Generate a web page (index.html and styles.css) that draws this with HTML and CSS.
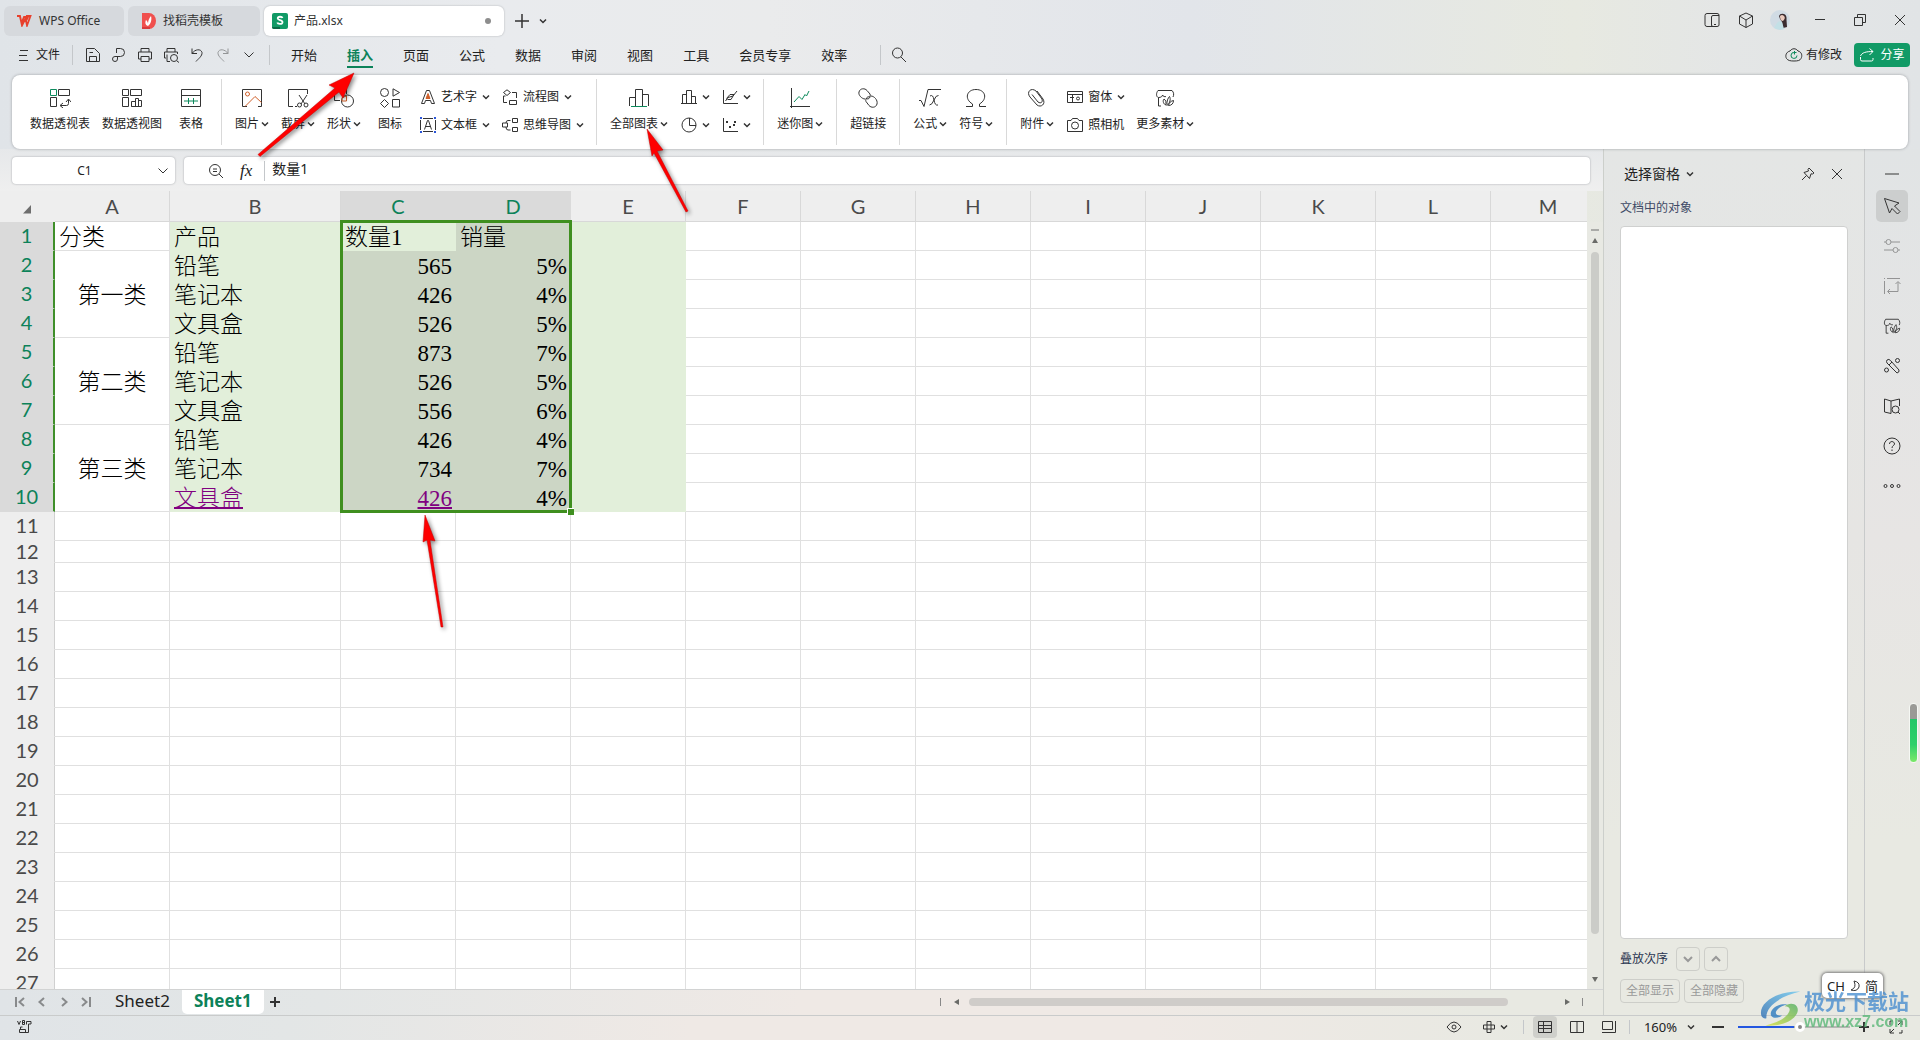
FILE: index.html
```html
<!DOCTYPE html>
<html lang="zh-CN">
<head>
<meta charset="utf-8">
<title>产品.xlsx - WPS Office</title>
<link rel="stylesheet" href="styles.css">
</head>
<body>
<svg class="defs" aria-hidden="true">
  <symbol id="chev" viewBox="0 0 8 8"><path d="M1 2.500 4 5.500 7 2.500" stroke-width="1.500"/></symbol>
  <symbol id="material" viewBox="0 0 20 20"><path d="M6 18H3.500V9.500C1 9 1 5 3 2.500H17C19 4.500 19 7 18 9M3.500 9.500C6 9.500 7.500 8.500 7.500 7 8 8.500 10 9 11 8.500M10.500 17C7.500 15 8 12 9 11 11 12 11.500 15 10.500 17ZM12 17.500C11.500 13 13 10 14.500 8.500 16 11 15 15 12 17.500ZM13.500 17.500C14 14.500 16 13 18.500 12.500 18.500 15.500 16.500 17.500 13.500 17.500Z"/></symbol>
</svg>

<header class="top">
  <div class="titlebar">
    <button class="doc-tab home"><svg width="16" height="12" viewBox="0 0 16 12"><path d="M1 1h3l1.500 7L8 2h4L10.500 5M4 1.500 6 10.500 9.500 3.500 11 10.500 14.500 1H10" fill="none" stroke="#e8402c" stroke-width="1.800"/></svg>WPS Office</button>
    <button class="doc-tab docer"><svg class="pic" width="14" height="16" viewBox="0 0 14 16"><path d="M0 0h7a7 8 0 0 1 0 16H0z" fill="#f0504e"/><path d="M6 13C3 12 3 9 4 7c1 1 2 2 2 4 0-3 1-6 3-8 1 3 0 8-3 10Z" fill="#fff"/><path d="M0 14h8v2H0z" fill="#d83a3c"/></svg>找稻壳模板</button>
    <button class="doc-tab active"><svg class="pic" width="16" height="16" viewBox="0 0 16 16"><rect width="16" height="16" rx="2" fill="#119a66"/><path d="M0 14h8v2H2q-2 0-2-2Z" fill="#0a6b46"/><path d="M10.500 5C10 3.300 5.800 3.200 5.700 5.400 5.600 7.600 10.600 6.600 10.500 9.200 10.400 11.500 5.800 11.400 5.300 9.500" fill="none" stroke="#fff" stroke-width="1.800"/></svg>产品.xlsx<i class="dot"></i></button>
    <button class="ic" aria-label="新建"><svg width="14" height="14" viewBox="0 0 14 14"><path d="M7 0v14M0 7h14" stroke-width="1.500"/></svg></button>
    <button class="ic tight" aria-label="更多"><svg width="8" height="8"><use href="#chev"/></svg></button>
    <div class="window-tools">
      <button class="ic" aria-label="侧栏"><svg width="16" height="16" viewBox="0 0 16 16"><path d="M9 14.500H3Q1 14.500 1 12.500V3.500Q1 1.500 3 1.500H13Q15 1.500 15 3V13Q15 14.500 13 14.500H9Q7.500 14.500 7.500 13V5Q7.500 3.500 9 3.500H15M10 12.500h2"/></svg></button>
      <button class="ic" aria-label="应用"><svg width="16" height="16" viewBox="0 0 16 16"><path d="M8 1 14.500 4V12L8 15.500 1.500 12V4ZM1.500 4 8 8 14.500 4M8 8V15.500"/></svg></button>
      <button class="ic account" aria-label="账号"><svg width="20" height="20" viewBox="0 0 20 20" class="pic"><circle cx="10" cy="10" r="10" fill="#d0dbe4"/><path d="M9 6Q10 3 14 4 17 5 16.500 10L17 17 13 18 12 12 10 9Z" fill="#3a2c30"/><path d="M10 6Q12 4 14 6T13 11Q10 11 10 6Z" fill="#e9c9bd"/><path d="M4 18 7 13Q9 10 12 12L14 19Q9 21 4 18Z" fill="#c3e0e6"/></svg></button>
      <button class="ic wide" aria-label="最小化"><svg width="10" height="16" viewBox="0 0 10 16"><path d="M0 7.500h10"/></svg></button>
      <button class="ic wide" aria-label="还原"><svg width="14" height="14" viewBox="0 0 14 14"><path d="M1.500 4.500h8v8h-8zM4.500 4.500v-3h8v8h-3"/></svg></button>
      <button class="ic wide" aria-label="关闭"><svg width="12" height="12" viewBox="0 0 12 12"><path d="M1 1l10 10M11 1 1 11"/></svg></button>
    </div>
  </div>

  <nav class="menubar">
    <button class="file"><svg width="9" height="12" viewBox="0 0 9 12"><path d="M1 1.500h8M0 6.500h8M0 11.500h9"/></svg>文件</button>
    <i class="vline"></i>
    <div class="quick">
      <button class="ic" aria-label="保存"><svg width="16" height="16" viewBox="0 0 16 16"><path d="M1.500 1.500H9.500L14.500 6.500V14.500H1.500ZM4.500 14.500V9.500H11.500V14.500M4.500 5.500H8"/></svg></button>
      <button class="ic" aria-label="输出"><svg width="16" height="16" viewBox="0 0 16 16"><path d="M5.500 6V1.500H9.500A4 4 0 0 1 9.500 9.500H4Q1.500 9.500 1.500 12T4 14.500 6.500 12V9.500"/></svg></button>
      <button class="ic" aria-label="打印"><svg width="16" height="16" viewBox="0 0 16 16"><path d="M4 5V1.500h8V5M4 12H1.500V5h13V12H12M4 9.500h8v5H4z"/></svg></button>
      <button class="ic" aria-label="打印预览"><svg width="16" height="16" viewBox="0 0 16 16"><path d="M4 5V1.500h8V5M3 11H1.500V5h13V7M4 7.500V14.500H7M14 14l2 1.500"/><circle cx="11" cy="11" r="3.500"/></svg></button>
      <button class="ic" aria-label="撤销"><svg width="16" height="16" viewBox="0 0 16 16"><path d="M3 1.500V6.500H8M3 6.500C6 2 12 1.500 13 5.500 13.500 9 9 12 7 14.500"/></svg></button>
      <button class="ic dim" aria-label="恢复"><svg width="16" height="16" viewBox="0 0 16 16"><path d="M13 1.500V6.500H8M13 6.500C10 2 4 1.500 3 5.500 2.500 9 7 12 9 14.500"/></svg></button>
      <button class="ic" aria-label="自定义"><svg width="12" height="8" viewBox="0 0 12 8"><path d="M1.500 1.500 6 6 10.500 1.500"/></svg></button>
    </div>
    <i class="vline"></i>
    <div class="menus">
      <button>开始</button><button class="on">插入</button><button>页面</button><button>公式</button><button>数据</button><button>审阅</button><button>视图</button><button>工具</button><button>会员专享</button><button>效率</button>
    </div>
    <i class="vline"></i>
    <button class="ic search" aria-label="搜索"><svg width="16" height="16" viewBox="0 0 16 16"><circle cx="6.500" cy="6" r="5"/><path d="M10 10 15 15"/></svg></button>
    <div class="sync">
      <button class="modified"><svg width="18" height="14" viewBox="0 0 18 14"><path d="M5 3C7 0 11 0 13 3 17 4 17.500 8 16 10.500 15 12.500 13 13 9 13S3 12.500 1.500 10.500C0 8 1 4 5 3Z"/><path class="g" d="M9.500 4.500A3 3 0 1 0 12 7.500M9.500 3v3.500M9.500 4.500h2"/></svg>有修改</button>
      <button class="share"><svg width="16" height="14" viewBox="0 0 16 14"><path d="M1.500 9v2.500Q1.500 13 3 13H12.500Q14 13 14 11.500V10M1.500 8C3 4.500 7 3.500 14 3.500M10.500 .5 14 3.500 10.500 7"/></svg>分享</button>
    </div>
  </nav>

  <section class="ribbon" aria-label="插入">
    <div class="group">
      <button class="big"><svg width="22" height="20" viewBox="0 0 22 20"><path class="g" d="M1.500 1.500h6v6h-6z"/><path d="M9.500 1.500h11v6h-11zM1.500 9.500h6v9h-6zM11.500 17.500h6q2 0 2-2v-4M17 14l2.500-3 2.500 3M14 15l-3 2.500 3 2.500"/></svg><span>数据透视表</span></button>
      <button class="big"><svg width="22" height="20" viewBox="0 0 22 20"><path d="M1.500 1.500h6v6h-6zM9.500 1.500h11v6h-11zM1.500 9.500h6v9h-6zM10.500 18.500v-5h4v5zM14.500 18.500v-8h3v8M17.500 12.500h3v6h-10"/></svg><span>数据透视图</span></button>
      <button class="big"><svg width="22" height="20" viewBox="0 0 22 20"><path d="M1.500 1.500h19v17h-19zM1.500 7.500h19"/><path class="g" d="M4 13h14M8.500 10v6M13.500 10v6"/></svg><span>表格</span></button>
    </div>
    <div class="group">
      <button class="big"><svg width="22" height="20" viewBox="0 0 22 20"><path d="M6 18.500H1.500v-17h19v17H17"/><g class="o"><circle cx="6.500" cy="6" r="2"/><path d="M4 18.500 14 8.500l6.500 6"/></g></svg><span>图片<svg width="8" height="8"><use href="#chev"/></svg></span></button>
      <button class="big"><svg width="22" height="20" viewBox="0 0 22 20"><path d="M6 18.500H1.500v-17h19V6M12 7l6 9M20 7l-6 9M8 18.500h2"/><circle cx="12.500" cy="17" r="2"/><circle cx="19" cy="17" r="2"/></svg><span>截屏<svg width="8" height="8"><use href="#chev"/></svg></span></button>
      <button class="big"><svg width="22" height="20" viewBox="0 0 22 20"><path d="M7 12.500H1.500v-11h12V6"/><circle cx="14.500" cy="13" r="6"/><path class="o" d="M9 13V9.500L13.500 8v5Z"/></svg><span>形状<svg width="8" height="8"><use href="#chev"/></svg></span></button>
      <button class="big"><svg width="22" height="20" viewBox="0 0 22 20"><circle cx="5.500" cy="4.500" r="4"/><path d="M14 .8v7.400L20.500 4.500ZM5.500 11.500 9.500 15.500 5.500 19.500 1.500 15.500ZM13.500 11.500h7v7.500h-7z"/></svg><span>图标</span></button>
      <div class="pair">
        <button class="small"><svg width="16" height="16" viewBox="0 0 16 16"><path d="M1.500 14.500 6.500 1.500h3L14.500 14.500H11.500L10.500 11.500H5.500L4.500 14.500Z"/><path class="o fill" d="M8 4.500 10 9.500H6Z"/></svg>艺术字<svg width="8" height="8"><use href="#chev"/></svg></button>
        <button class="small"><svg width="16" height="16" viewBox="0 0 16 16"><path d="M.5 3v10M15.500 3v10M3 1.500h10M3 14.500h10M4.500 12.500 7.500 3.500h1l3 9M5.500 9.500h5"/><path class="b" d="M0 0h2v2H0zM14 0h2v2h-2zM0 14h2v2H0zM14 14h2v2h-2z"/></svg>文本框<svg width="8" height="8"><use href="#chev"/></svg></button>
      </div>
      <div class="pair">
        <button class="small"><svg width="16" height="16" viewBox="0 0 16 16"><path d="M5 .8 8.500 3.500 5 6.500 1.500 3.500ZM1.500 7V13.500H5M7.500 11.500h7v4h-7zM10 3.500H14.500V9M1.500 7h2"/></svg>流程图<svg width="8" height="8"><use href="#chev"/></svg></button>
        <button class="small"><svg width="16" height="16" viewBox="0 0 16 16"><path d="M.5 6h5v4h-5zM10.500 1.500h5v4h-5zM10.500 10.500h5v4h-5zM8.500 3.500H6Q4 3.500 4 6M8.500 13H6Q4 13 4 10"/></svg>思维导图<svg width="8" height="8"><use href="#chev"/></svg></button>
      </div>
    </div>
    <div class="group">
      <button class="big"><svg width="22" height="20" viewBox="0 0 22 20"><path d="M1.500 18V9.500h6V18M7.500 10V1.500h7V18M14.500 6.500h6V18"/><path class="g" d="M3 18.500h16"/></svg><span>全部图表<svg width="8" height="8"><use href="#chev"/></svg></span></button>
      <div class="pair">
        <button class="small" aria-label="柱形图"><svg width="16" height="16" viewBox="0 0 16 16"><path d="M0 14.500h16M1.500 14.500v-9h4v9M5.500 6V1.500h5v13M10.500 7.500h4v7"/></svg><svg width="8" height="8"><use href="#chev"/></svg></button>
        <button class="small" aria-label="饼图"><svg width="16" height="16" viewBox="0 0 16 16"><circle cx="8" cy="8" r="7"/><path d="M8.500 1V8.500H15"/></svg><svg width="8" height="8"><use href="#chev"/></svg></button>
      </div>
      <div class="pair">
        <button class="small" aria-label="折线图"><svg width="16" height="16" viewBox="0 0 16 16"><path d="M1.500 1v13.500H16M3.500 12 6 8.500 11 7 15 2M4.500 9.500 8 5.500H12L9 10.500H5.500"/></svg><svg width="8" height="8"><use href="#chev"/></svg></button>
        <button class="small" aria-label="散点图"><svg width="16" height="16" viewBox="0 0 16 16"><path d="M1.500 1v13.500H16"/><path d="M4 5h2M7 10h2M12 5h2M11 8h2" stroke-width="2"/></svg><svg width="8" height="8"><use href="#chev"/></svg></button>
      </div>
    </div>
    <div class="group">
      <button class="big"><svg width="22" height="20" viewBox="0 0 22 20"><path d="M2.500 0v20M1 18.500h20"/><path class="g" d="M5 14 10 8.500 13 11.500 16 6.500 17.500 8 20 3"/></svg><span>迷你图<svg width="8" height="8"><use href="#chev"/></svg></span></button>
    </div>
    <div class="group">
      <button class="big"><svg width="22" height="20" viewBox="0 0 22 20"><path d="M8 11C5 11 1 7 2 4 3 0 8 0 10 2.500L13 6C14 9 12 12 9 10.500M14 8C17 8 21 12 20 16 19 20 14 20 12 17.500L9 13.500C8 11 10 8 13 9"/></svg><span>超链接</span></button>
    </div>
    <div class="group">
      <button class="big"><svg width="22" height="20" viewBox="0 0 22 20"><path d="M0 12.500H2L5 18.500 9 1.500H22M11 8Q14 6 15 12T19 17M19.500 7.500Q17 7 15 12T10.500 17"/></svg><span>公式<svg width="8" height="8"><use href="#chev"/></svg></span></button>
      <button class="big"><svg width="22" height="20" viewBox="0 0 22 20"><path d="M1 18.500H7.500V16C-1 11 1.500 1.500 11 1.500S23 11 14.500 16V18.500H21"/></svg><span>符号<svg width="8" height="8"><use href="#chev"/></svg></span></button>
    </div>
    <div class="group">
      <button class="big"><svg width="22" height="20" viewBox="0 0 22 20"><path d="M11 3 17 11C20 16 15 20 11 17L4 9C0 4 5-1 10 3L16 11C17 14 15 16 12 14L6 6.500"/></svg><span>附件<svg width="8" height="8"><use href="#chev"/></svg></span></button>
      <div class="pair">
        <button class="small"><svg width="16" height="16" viewBox="0 0 16 16"><path d="M.5 2.500h15v11H.5zM.5 5.500h15M3 8.500h4M5.500 5.500v8"/><circle cx="11" cy="9.500" r="1.500"/></svg>窗体<svg width="8" height="8"><use href="#chev"/></svg></button>
        <button class="small"><svg width="16" height="16" viewBox="0 0 16 16"><path d="M.5 3.500H4L5.500 1.500h5L12 3.500h3.500v11H.5z"/><circle cx="8" cy="8.500" r="3.500"/></svg>照相机</button>
      </div>
      <button class="big"><svg width="22" height="20" viewBox="0 0 20 20"><use href="#material"/></svg><span>更多素材<svg width="8" height="8"><use href="#chev"/></svg></span></button>
    </div>
  </section>
</header>

<div class="work">
  <main class="sheet">
    <div class="formula">
      <div class="namebox"><input aria-label="名称框" value="C1"><svg width="12" height="8" viewBox="0 0 12 8"><path d="M1.500 1.500 6 6 10.500 1.500"/></svg></div>
      <div class="fxbox">
        <svg width="16" height="16" viewBox="0 0 16 16"><circle cx="7" cy="7" r="5.500"/><path d="M11 11l4 4M5 6h4M5 8.500h4"/></svg>
        <em>fx</em><i class="vline"></i>
        <input aria-label="编辑栏" value="数量1">
      </div>
    </div>
    <div class="gridrow">
      <div class="grid">
        <table>
          <colgroup><col class="ch"><col class="cn"><col class="cb"><col class="cn" span="11"></colgroup>
          <thead><tr><th class="corner"><svg width="10" height="10" viewBox="0 0 10 10"><path d="M9 1V9.500H1Z"/></svg></th><th>A<th>B<th class="s">C<th class="s">D<th>E<th>F<th>G<th>H<th>I<th>J<th>K<th>L<th>M</tr></thead>
          <tbody class="data">
            <tr><th>1<td>分类<td class="f">产品<td class="f">数量1<td class="x">销量<td class="f"><td><td><td><td><td><td><td><td></tr>
            <tr><th>2<td class="m" rowspan="3">第一类<td class="f">铅笔<td class="x n">565<td class="x n">5%<td class="f"><td><td><td><td><td><td><td><td></tr>
            <tr><th>3<td class="f">笔记本<td class="x n">426<td class="x n">4%<td class="f"><td><td><td><td><td><td><td><td></tr>
            <tr><th>4<td class="f">文具盒<td class="x n">526<td class="x n">5%<td class="f"><td><td><td><td><td><td><td><td></tr>
            <tr><th>5<td class="m" rowspan="3">第二类<td class="f">铅笔<td class="x n">873<td class="x n">7%<td class="f"><td><td><td><td><td><td><td><td></tr>
            <tr><th>6<td class="f">笔记本<td class="x n">526<td class="x n">5%<td class="f"><td><td><td><td><td><td><td><td></tr>
            <tr><th>7<td class="f">文具盒<td class="x n">556<td class="x n">6%<td class="f"><td><td><td><td><td><td><td><td></tr>
            <tr><th>8<td class="m" rowspan="3">第三类<td class="f">铅笔<td class="x n">426<td class="x n">4%<td class="f"><td><td><td><td><td><td><td><td></tr>
            <tr><th>9<td class="f">笔记本<td class="x n">734<td class="x n">7%<td class="f"><td><td><td><td><td><td><td><td></tr>
            <tr><th>10<td class="f"><a href="#pen">文具盒</a><td class="x n"><a href="#pen">426</a><td class="x n">4%<td class="f"><td><td><td><td><td><td><td><td></tr>
          </tbody>
          <tbody>
            <tr><th>11<td><td><td><td><td><td><td><td><td><td><td><td><td></tr>
            <tr class="low"><th>12<td><td><td><td><td><td><td><td><td><td><td><td><td></tr>
            <tr><th>13<td><td><td><td><td><td><td><td><td><td><td><td><td></tr>
            <tr><th>14<td><td><td><td><td><td><td><td><td><td><td><td><td></tr>
            <tr><th>15<td><td><td><td><td><td><td><td><td><td><td><td><td></tr>
            <tr><th>16<td><td><td><td><td><td><td><td><td><td><td><td><td></tr>
            <tr><th>17<td><td><td><td><td><td><td><td><td><td><td><td><td></tr>
            <tr><th>18<td><td><td><td><td><td><td><td><td><td><td><td><td></tr>
            <tr><th>19<td><td><td><td><td><td><td><td><td><td><td><td><td></tr>
            <tr><th>20<td><td><td><td><td><td><td><td><td><td><td><td><td></tr>
            <tr><th>21<td><td><td><td><td><td><td><td><td><td><td><td><td></tr>
            <tr><th>22<td><td><td><td><td><td><td><td><td><td><td><td><td></tr>
            <tr><th>23<td><td><td><td><td><td><td><td><td><td><td><td><td></tr>
            <tr><th>24<td><td><td><td><td><td><td><td><td><td><td><td><td></tr>
            <tr><th>25<td><td><td><td><td><td><td><td><td><td><td><td><td></tr>
            <tr><th>26<td><td><td><td><td><td><td><td><td><td><td><td><td></tr>
            <tr><th>27<td><td><td><td><td><td><td><td><td><td><td><td><td></tr>
          </tbody>
        </table>
        <div class="selection"></div>
      </div>
      <div class="vscroll"><i class="split"></i><i class="up"></i><i class="thumb"></i><i class="down"></i></div>
    </div>
    <div class="sheetbar">
      <div class="sheetnav">
        <button class="ic" aria-label="第一个"><svg width="10" height="10" viewBox="0 0 10 10"><path d="M1 0v10M9 1 4.500 5 9 9"/></svg></button>
        <button class="ic" aria-label="上一个"><svg width="10" height="10" viewBox="0 0 10 10"><path d="M7 1 2.500 5 7 9"/></svg></button>
        <button class="ic" aria-label="下一个"><svg width="10" height="10" viewBox="0 0 10 10"><path d="M3 1 7.500 5 3 9"/></svg></button>
        <button class="ic" aria-label="最后一个"><svg width="10" height="10" viewBox="0 0 10 10"><path d="M9 0v10M1 1 5.500 5 1 9"/></svg></button>
      </div>
      <button class="sheet-tab">Sheet2</button><button class="sheet-tab cur">Sheet1</button>
      <button class="ic" aria-label="新建工作表"><svg width="10" height="10" viewBox="0 0 10 10" class="thick"><path d="M5 0v10M0 5h10"/></svg></button>
      <div class="hscroll"><i class="end"></i><i class="left"></i><i class="thumb"></i><i class="right"></i><i class="end"></i></div>
    </div>
  </main>

  <aside class="pane">
    <div class="pane-head"><button class="pane-title">选择窗格<svg width="8" height="8"><use href="#chev"/></svg></button>
      <button class="ic" aria-label="固定"><svg width="14" height="14" viewBox="0 0 14 14"><path d="M8 1 13 6 11.500 7 10 6.800 8.500 11.500 3 5.500 7.500 4 7 2.500ZM5.500 8.500 1 13"/></svg></button>
      <button class="ic" aria-label="关闭窗格"><svg width="12" height="12" viewBox="0 0 12 12"><path d="M1 1l10 10M11 1 1 11"/></svg></button></div>
    <p class="pane-sub">文档中的对象</p>
    <div class="objects"></div>
    <div class="order"><span>叠放次序</span>
      <button disabled aria-label="下移"><svg width="12" height="8" viewBox="0 0 12 8"><path d="M2 2 6 6 10 2"/></svg></button>
      <button disabled aria-label="上移"><svg width="12" height="8" viewBox="0 0 12 8"><path d="M2 6 6 2 10 6"/></svg></button></div>
    <div class="order all"><button disabled>全部显示</button><button disabled>全部隐藏</button></div>
  </aside>

  <aside class="rail">
    <i class="dash"></i>
    <button class="on" aria-label="选择"><svg width="18" height="18" viewBox="0 0 18 18"><path d="M1.500 1.500 16 6 11.500 9 17 14.500 14.500 17 9 11.500 6.500 16Z"/></svg></button>
    <button class="dim" aria-label="属性"><svg width="18" height="18" viewBox="0 0 18 18"><circle cx="5.500" cy="5" r="2.500"/><circle cx="12.500" cy="13" r="2.500"/><path d="M1 5h2M8 5h9M1 13h9M15 13h2"/></svg></button>
    <button class="dim" aria-label="布局"><svg width="18" height="18" viewBox="0 0 18 18"><path d="M4 1.500h13M1.500 4v13M1 1.500h1M15 5v9.500H5M12.500 7 15 4.500 17.500 7M7 12 4.500 14.500 7 17"/></svg></button>
    <button aria-label="素材"><svg width="18" height="18"><use href="#material"/></svg></button>
    <button aria-label="工具"><svg width="18" height="18" viewBox="0 0 18 18"><path d="M4 3Q6 1.500 7.500 3.500L16 13Q16.500 15.500 14 16L4 6Q3 4.500 4 3ZM6 8 9 5"/><circle cx="14.500" cy="3.500" r="2"/><circle cx="3.500" cy="13" r="2"/></svg></button>
    <button aria-label="查找"><svg width="18" height="18" viewBox="0 0 18 18"><path d="M8 16.500V4L1.500 2V15L8 16.500M8 4 16.500 2V9M15 15l2 2"/><circle cx="12.500" cy="12.500" r="3.500"/></svg></button>
    <button aria-label="帮助"><svg width="18" height="18" viewBox="0 0 18 18"><circle cx="9" cy="9" r="8"/><path d="M6.500 7C6.500 3.500 11.500 4 11.500 7 11.500 8.500 9 8.500 9 11M9 12.500V14"/></svg></button>
    <button aria-label="更多"><svg width="18" height="6" viewBox="0 0 18 6"><circle cx="2.500" cy="3" r="1.500"/><circle cx="9" cy="3" r="1.500"/><circle cx="15.500" cy="3" r="1.500"/></svg></button>
  </aside>
</div>

<footer class="status">
  <svg width="15" height="14" viewBox="0 0 15 14"><path d="M.5 1 2 4.500 3.500 1M5.500 4.500v-4h2v4zM5.500 2.500h2M9.500 4.500V1.500H14V4H11.500V12.500H2.500V9.500H8.500V12M3.500 9V7h2"/></svg>
  <div class="status-right">
    <button class="ic" aria-label="护眼"><svg width="16" height="14" viewBox="0 0 16 14"><path d="M1 7Q8-3 15 7 8 17 1 7Z"/><circle cx="8" cy="7" r="2"/></svg></button>
    <button class="ic cross" aria-label="阅读"><svg width="14" height="14" viewBox="0 0 14 14"><path d="M5 5V1.500h4V5h3.500v4H9v3.500H5V9H1.500V5ZM5 5h4v4H5z"/></svg><svg width="8" height="8"><use href="#chev"/></svg></button>
    <i class="vline"></i>
    <div class="views">
      <button class="ic on" aria-label="普通视图"><svg width="14" height="14" viewBox="0 0 14 14"><path d="M.5 1.500h13v11H.5zM.5 5.500h13M5.500 1.500v11M.5 8.500h13"/></svg></button>
      <button class="ic" aria-label="分页预览"><svg width="14" height="14" viewBox="0 0 14 14"><path d="M.5 1.500h13v11H.5zM7 1.500v11"/></svg></button>
      <button class="ic" aria-label="页面布局"><svg width="14" height="14" viewBox="0 0 14 14"><path d="M.5 1.500h10v8H.5zM13.500 1v11.500H0"/></svg></button>
    </div>
    <i class="vline"></i>
    <button class="zoom">160%<svg width="8" height="8"><use href="#chev"/></svg></button>
    <button class="ic" aria-label="缩小"><svg width="12" height="12" viewBox="0 0 12 12" class="thick"><path d="M0 6h12"/></svg></button>
    <input class="slider" type="range" min="0" max="100" value="56" aria-label="缩放">
    <button class="ic" aria-label="放大"><svg width="10" height="10" viewBox="0 0 10 10" class="thick"><path d="M5 0v10M0 5h10"/></svg></button>
    <button class="ic" aria-label="全屏"><svg width="14" height="14" viewBox="0 0 14 14"><path d="M9 1h4v4M13 1 9 5M1 5V1h3M1 9v4h4M1 13l4-4M13 10v3h-3"/></svg></button>
  </div>
</footer>

<svg class="marks" width="700" height="640" viewBox="0 0 700 640" aria-hidden="true">
  <g fill="#fe0000" stroke="#c40000" stroke-width=".5">
    <path d="M354 73 343 98 339 92 260 156.500 258 154.500 335 88 329 85Z"/>
    <path d="M647 129 663 150 657 151 688 211 686 212 654 153 652 156Z"/>
    <path d="M425 515 435 541 430 540 443 627 441 627 427 540 423 542Z"/>
  </g>
</svg>
<div class="float"></div>
<div class="ime">CH <svg width="12" height="12" viewBox="0 0 12 12"><path d="M5 1Q11 2 10 7 8 12 2 10 8 8 5 1Z"/></svg> 简</div>
<div class="brand">
  <svg width="44" height="40" viewBox="0 0 48 40"><defs><linearGradient id="bl" x1="0" y1="1" x2="1" y2="0"><stop stop-color="#2f6fb4"/><stop offset="1" stop-color="#6cc8f0"/></linearGradient><linearGradient id="gr" x1="0" y1="1" x2="1" y2="0"><stop stop-color="#d6e23c"/><stop offset="1" stop-color="#4fae62"/></linearGradient></defs><path d="M44 1C20 0 1 12 1 24c0 5 3 7 6 6C6 17 22 6 44 1Z" fill="url(#bl)"/><path d="M6 38C30 40 46 26 40 17 37 13 30 14 27 17c6 0 7 4 3 9C25 32 15 36 6 38Z" fill="url(#gr)"/><path d="M30 15C19 13 10 21 12 27c2 4 9 3 12 0-6 1-8-2-6-5s6-6 12-7Z" fill="#2f7cc0"/></svg>
  <div><b>极光下载站</b><span>www.xz7.com</span></div>
</div>
</body>
</html>
```
FILE: styles.css
```css
* { box-sizing: border-box; }
html, body { height: 100%; }
body {
  margin: 0;
  display: flex;
  flex-direction: column;
  overflow: hidden;
  position: relative;
  font: 12px/16px "Noto Sans", "Noto Sans CJK SC", sans-serif;
  color: #222;
  background: linear-gradient(90deg, #e0e4e8 0%, #e9ebee 26%, #eaebec 40%, #e2e5ea 62%, #e7e9e1 82%, #e4e6e6 90%, #e1e4e6 100%);
}
button, input { font: inherit; color: inherit; }
button { border: 0; background: none; padding: 0; display: inline-flex; align-items: center; justify-content: center; white-space: nowrap; }
input { border: 0; outline: 0; background: none; padding: 0; min-width: 0; }
svg { fill: none; stroke: #333; stroke-width: 1; flex: none; }
.defs { position: absolute; width: 0; height: 0; }
.g { stroke: #0c8a5c; }
.o { stroke: #d0602a; }
.fill { fill: #d0602a; }
.b { fill: #2a55d8; stroke: none; }
.pic { stroke: none; }
.thick { stroke-width: 2; }
.vline { width: 1px; height: 20px; background: #c4c7ca; }
.dim { opacity: .45; }

.top { flex: none; }
.titlebar { height: 38px; padding: 0 7px 0 4px; display: flex; align-items: center; gap: 4px; }
.doc-tab { height: 30px; margin-top: 4px; border-radius: 6px; background: #d6d9dd; justify-content: flex-start; gap: 7px; color: #333; }
.home { width: 120px; padding-left: 12px; }
.docer { width: 132px; padding-left: 14px; }
.active { width: 240px; padding: 0 13px 0 8px; gap: 6px; background: #fff; box-shadow: 0 0 2px #a9acb0; }
.dot { width: 6px; height: 6px; border-radius: 3px; background: #8d8d8d; margin-left: auto; }
.titlebar > .ic { margin: 4px 0 0 7px; }
.titlebar > .tight { margin-left: 6px; }
.window-tools { margin: 2px 0 0 auto; display: flex; gap: 14px; align-items: center; }
.window-tools .ic { width: 20px; }
.window-tools .account { margin-right: 3px; }
.window-tools .wide { width: 26px; }

.menubar { height: 36px; padding: 0 10px 2px 19px; display: flex; align-items: center; }
.file { gap: 8px; }
.file + .vline { margin: 0 12px; }
.quick { display: flex; gap: 10px; margin-right: 12px; }
.quick .ic { width: 16px; height: 16px; }
.menus { display: flex; gap: 30px; font-size: 13px; margin: 0 33px 0 21px; }
.menus button { height: 26px; border: solid transparent; border-width: 2px 0; }
.menus .on { color: #0c8259; font-weight: 700; border-bottom-color: #0c8259; }
.search { margin-left: 10px; }
.sync { margin-left: auto; display: flex; gap: 12px; }
.modified { gap: 3px; }
.share { height: 24px; width: 56px; gap: 5px; border-radius: 4px; background: #119a66; color: #fff; }
.share svg { stroke: #fff; }

.ribbon { margin: 1px 12px 0; height: 74px; display: flex; background: #fff; border-radius: 8px; box-shadow: 0 0 3px #9b9ea2; padding: 4px 5px; position: relative; z-index: 1; }
.group { display: flex; align-items: flex-start; padding: 9px 7px 0; border-right: 1px solid #d9d9d9; }
.group:last-child { border: 0; }
.big { flex-direction: column; gap: 8px; min-width: 46px; padding: 0 6px; }
.big span { display: flex; align-items: center; gap: 2px; }
.pair { display: grid; gap: 11px; padding: 0 5px 0 7px; justify-items: start; }
.small { gap: 5px; height: 17px; }

.work { flex: 1; min-height: 0; display: flex; }
.sheet { flex: 1; min-width: 0; display: flex; flex-direction: column; border-right: 1px solid #cccfcb; }
.formula { display: flex; gap: 9px; padding: 8px 13px 7px 12px; background: linear-gradient(#e6e8ea, #efefef); }
.namebox, .fxbox { height: 27px; background: #fff; border-radius: 4px; box-shadow: 0 0 2px #9b9ea2; display: flex; align-items: center; }
.namebox { width: 163px; padding-right: 6px; }
.namebox input { flex: 1; text-align: center; }
.fxbox { flex: 1; padding-left: 24px; }
.fxbox em { font: italic 17px/20px "Liberation Serif", serif; margin: 0 12px 0 16px; }
.fxbox input { flex: 1; font-size: 14px; padding: 0 0 3px 7px; }

.gridrow { flex: 1; min-height: 0; display: flex; }
.grid { flex: 1; min-width: 0; overflow: hidden; position: relative; background: #fff; }
table { table-layout: fixed; width: 1px; border-spacing: 0; }
.ch { width: 55px; }
.cn { width: 115px; }
.cb { width: 171px; }
tr { height: 29px; }
thead tr { height: 31px; }
.low { height: 22px; }
th, td { padding: 0; overflow: hidden; white-space: nowrap; border: solid #e0e0e0; border-width: 0 1px 1px 0; }
th { font: 20px/20px Lato, sans-serif; color: #4a4a4a; background: #eeeeee; }
thead th { border-color: #d8d8d8; }
tbody th { line-height: 18px; padding-bottom: 3px; border-bottom-color: transparent; border-right-color: #d0d0d0; }
.low th { padding-bottom: 2px; }
.corner svg { stroke: none; fill: #6e6e6e; }
.corner { border-color: transparent; }
.s, .data th { background: #dadada; color: #0c8259; border-color: #dadada; }
.data th { border-right: 2px solid #3f8f2a; }
td { font: 300 23px/24px "Liberation Serif", "Noto Sans CJK SC", serif; color: #000; padding: 4px 4px 0; }
.low td { padding: 0; line-height: 20px; }
.f { background: #e2efda; border-color: #e2efda; }
.x { background: #ccd6c5; border-color: #ccd6c5; }
.n { text-align: right; padding-right: 3px; }
.m { text-align: center; }
td a { color: #800080; text-decoration: underline; text-decoration-thickness: 2px; }
.selection { position: absolute; left: 340px; top: 29px; width: 232px; height: 293px; border: 3px solid #3f8f1f; }
.selection::after { content: ""; position: absolute; right: -5px; bottom: -5px; width: 6px; height: 6px; background: #3f8f1f; border: solid #fff; border-width: 1px 0 0 1px; }

.vscroll { width: 16px; margin-top: 31px; background: #e8e9e3; display: flex; flex-direction: column; align-items: center; gap: 7px; padding: 7px 0; }
.split { width: 8px; height: 2px; background: #aaaba8; }
.up, .down { border: 3px solid transparent; }
.up { border-top-width: 0; border-bottom: 5px solid #6a6b68; }
.down { border-bottom-width: 0; border-top: 5px solid #6a6b68; }
.vscroll .thumb { flex: 1; width: 8px; border-radius: 4px; background: #cbccc8; margin: 2px 0 36px; }

.sheetbar { height: 26px; border-top: 1px solid #d2d3d3; display: flex; align-items: flex-start; background: linear-gradient(90deg, #e0e4e7 0%, #e3e6e6 20%, #efe9e5 50%, #efe9e5 70%, #e8e9e2 92%); padding-left: 15px; }
.sheetbar .ic { height: 24px; }
.sheetnav { display: flex; gap: 12px; margin-right: 12px; opacity: .5; }
.sheetnav svg { stroke-width: 2; }
.sheet-tab { font: 17px/20px "Noto Sans", sans-serif; height: 24px; padding: 0 12px 2px; }
.cur { background: #fff; color: #0c8259; font-weight: 700; border-radius: 0 0 5px 5px; margin-right: 6px; }
.hscroll { margin-left: auto; width: 41%; min-width: 663px; height: 23px; display: flex; align-items: center; padding-right: 20px; }
.end { width: 1px; height: 8px; background: #888; }
.left, .right { border: 3px solid transparent; }
.left { border-left-width: 0; border-right: 5px solid #6a6b68; margin: 0 10px 0 13px; }
.right { border-right-width: 0; border-left: 5px solid #6a6b68; margin-right: 12px; }
.hscroll .thumb { flex: 1; height: 8px; border-radius: 4px; background: #cfccc9; margin-right: 57px; }

.pane { width: 261px; padding: 12px 16px 12px 16px; display: flex; flex-direction: column; border-right: 1px solid #c8cacb; background: linear-gradient(#e4e6e5, #e6e5e3 45%, #e8e9e2 80%); }
.pane-head { display: flex; align-items: center; height: 26px; gap: 16px; padding: 0 5px 0 4px; }
.pane-title { font-size: 14px; margin-right: auto; gap: 6px; }
.pane-sub { margin: 13px 0 10px; color: #3f4a66; }
.objects { flex: 1; background: #fff; border: 1px solid #cfd0cf; border-radius: 4px; }
.order { display: flex; align-items: center; gap: 4px; margin-top: 8px; height: 24px; color: #2a3550; }
.order span { margin-right: 4px; }
.order button { width: 24px; height: 24px; border: 1px solid #cdcec9; border-radius: 4px; color: #999; }
.order svg { stroke: #999; stroke-width: 2; }
.all button { width: 60px; }

.rail { width: 55px; display: flex; flex-direction: column; align-items: center; padding: 24px 1px 0 0; background: linear-gradient(#e1e4e5, #e7e5e4 45%, #e8e9e2 80%); }
.dash { width: 14px; height: 2px; background: #8b8d8d; margin-bottom: 15px; }
.rail button { width: 32px; height: 32px; margin-bottom: 8px; }
.rail .on { background: #cccece; border-radius: 5px; }

.status { flex: none; height: 25px; border-top: 1px solid #c9cbcb; display: flex; align-items: center; padding: 0 17px 2px; background: linear-gradient(90deg, #e0e4e7 0%, #e3e6e6 15%, #efe9e5 36%, #efe9e5 60%, #e8e9e2 80%); }
.status-right { margin-left: auto; display: flex; align-items: center; }
.status .vline { height: 14px; }
.cross { margin: 0 15px 0 20px; gap: 4px; }
.views { display: flex; margin: 0 8px 0 9px; gap: 8px; }
.views .ic { width: 24px; height: 22px; }
.views .on { background: #cfd0cb; border-radius: 4px; }
.zoom { font-size: 13px; gap: 10px; margin: 0 17px 0 14px; }
.slider { width: 112px; height: 12px; margin: 0 9px 0 14px; appearance: none; background: linear-gradient(#2457e0, #2457e0) 0 5px / 50% 2px no-repeat, linear-gradient(#b5b7b3, #b5b7b3) 0 5px / 100% 2px no-repeat; }
.slider::-webkit-slider-thumb { appearance: none; width: 10px; height: 10px; border-radius: 5px; background: #888; border: 3px solid #fff; }
.slider + .ic { margin-right: 20px; }

.marks { position: absolute; left: 0; top: 0; z-index: 3; pointer-events: none; filter: drop-shadow(2px 2px 2px #0007); }
.float { position: absolute; right: 2px; top: 703px; width: 9px; height: 60px; border: 1px solid #f6f8f4; border-radius: 4px; background: linear-gradient(#9a9a96 26%, #22c768 26%, #2fd06a 70%, #7be86a); }
.ime { position: absolute; right: 37px; bottom: 42px; width: 61px; height: 25px; background: #fff; border-radius: 5px; box-shadow: 0 0 3px 1px #777; display: flex; align-items: center; justify-content: center; gap: 4px; font-size: 13px; }
.brand { position: absolute; right: 11px; bottom: 9px; display: flex; opacity: .8; }
.brand > svg { stroke: none; }
.brand b { display: block; font: 700 21px/22px "Noto Sans CJK SC", sans-serif; color: #4a8fd0; margin-bottom: 2px; }
.brand span { display: block; font: 700 16px/18px "Liberation Sans", sans-serif; color: #5cb878; }
```
